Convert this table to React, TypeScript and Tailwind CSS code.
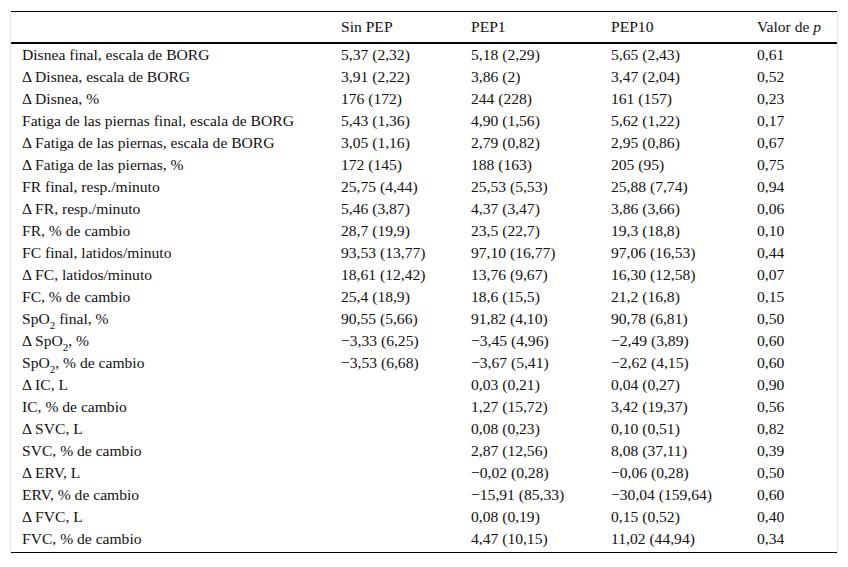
import React from 'react';

type Row = { label: React.ReactNode; a: string; b: string; c: string; p: string };

const Sp = () => (
  <>
    SpO<sub className="text-[11px] relative top-[1px] align-sub leading-none">2</sub>
  </>
);

const rows: Row[] = [
  { label: 'Disnea final, escala de BORG', a: '5,37 (2,32)', b: '5,18 (2,29)', c: '5,65 (2,43)', p: '0,61' },
  { label: 'Δ Disnea, escala de BORG', a: '3,91 (2,22)', b: '3,86 (2)', c: '3,47 (2,04)', p: '0,52' },
  { label: 'Δ Disnea, %', a: '176 (172)', b: '244 (228)', c: '161 (157)', p: '0,23' },
  { label: 'Fatiga de las piernas final, escala de BORG', a: '5,43 (1,36)', b: '4,90 (1,56)', c: '5,62 (1,22)', p: '0,17' },
  { label: 'Δ Fatiga de las piernas, escala de BORG', a: '3,05 (1,16)', b: '2,79 (0,82)', c: '2,95 (0,86)', p: '0,67' },
  { label: 'Δ Fatiga de las piernas, %', a: '172 (145)', b: '188 (163)', c: '205 (95)', p: '0,75' },
  { label: 'FR final, resp./minuto', a: '25,75 (4,44)', b: '25,53 (5,53)', c: '25,88 (7,74)', p: '0,94' },
  { label: 'Δ FR, resp./minuto', a: '5,46 (3,87)', b: '4,37 (3,47)', c: '3,86 (3,66)', p: '0,06' },
  { label: 'FR, % de cambio', a: '28,7 (19,9)', b: '23,5 (22,7)', c: '19,3 (18,8)', p: '0,10' },
  { label: 'FC final, latidos/minuto', a: '93,53 (13,77)', b: '97,10 (16,77)', c: '97,06 (16,53)', p: '0,44' },
  { label: 'Δ FC, latidos/minuto', a: '18,61 (12,42)', b: '13,76 (9,67)', c: '16,30 (12,58)', p: '0,07' },
  { label: 'FC, % de cambio', a: '25,4 (18,9)', b: '18,6 (15,5)', c: '21,2 (16,8)', p: '0,15' },
  { label: <><Sp /> final, %</>, a: '90,55 (5,66)', b: '91,82 (4,10)', c: '90,78 (6,81)', p: '0,50' },
  { label: <>Δ <Sp />, %</>, a: '−3,33 (6,25)', b: '−3,45 (4,96)', c: '−2,49 (3,89)', p: '0,60' },
  { label: <><Sp />, % de cambio</>, a: '−3,53 (6,68)', b: '−3,67 (5,41)', c: '−2,62 (4,15)', p: '0,60' },
  { label: 'Δ IC, L', a: '', b: '0,03 (0,21)', c: '0,04 (0,27)', p: '0,90' },
  { label: 'IC, % de cambio', a: '', b: '1,27 (15,72)', c: '3,42 (19,37)', p: '0,56' },
  { label: 'Δ SVC, L', a: '', b: '0,08 (0,23)', c: '0,10 (0,51)', p: '0,82' },
  { label: 'SVC, % de cambio', a: '', b: '2,87 (12,56)', c: '8,08 (37,11)', p: '0,39' },
  { label: 'Δ ERV, L', a: '', b: '−0,02 (0,28)', c: '−0,06 (0,28)', p: '0,50' },
  { label: 'ERV, % de cambio', a: '', b: '−15,91 (85,33)', c: '−30,04 (159,64)', p: '0,60' },
  { label: 'Δ FVC, L', a: '', b: '0,08 (0,19)', c: '0,15 (0,52)', p: '0,40' },
  { label: 'FVC, % de cambio', a: '', b: '4,47 (10,15)', c: '11,02 (44,94)', p: '0,34' },
];

export default function App() {
  return (
    <div className="w-[848px] h-[567px] bg-white pt-[11px] pl-[10px] text-[#111] text-[15.6px] font-['Liberation_Serif',serif]">
      <div className="w-[828px] border-x border-[#e6e6e6]">
        <table className="w-full table-fixed border-collapse">
          <colgroup>
            <col className="w-[319px]" />
            <col className="w-[130px]" />
            <col className="w-[140px]" />
            <col className="w-[146px]" />
            <col />
          </colgroup>
          <thead>
            <tr className="h-[31px] border-t border-black border-b-2 border-b-black text-left">
              <th className="font-normal pl-[11px]"></th>
              <th className="font-normal pl-[11px]">Sin PEP</th>
              <th className="font-normal pl-[11px]">PEP1</th>
              <th className="font-normal pl-[11px]">PEP10</th>
              <th className="font-normal pl-[11px]">
                Valor de <i>p</i>
              </th>
            </tr>
          </thead>
          <tbody className="border-b border-black">
            {rows.map((r, i) => (
              <tr key={i} className="h-[22px] leading-[22px]">
                <td className="pl-[11px] whitespace-nowrap">{r.label}</td>
                <td className="pl-[11px] whitespace-nowrap">{r.a}</td>
                <td className="pl-[11px] whitespace-nowrap">{r.b}</td>
                <td className="pl-[11px] whitespace-nowrap">{r.c}</td>
                <td className="pl-[11px] whitespace-nowrap">{r.p}</td>
              </tr>
            ))}
            <tr className="h-[3px]">
              <td colSpan={5}></td>
            </tr>
          </tbody>
        </table>
      </div>
    </div>
  );
}
